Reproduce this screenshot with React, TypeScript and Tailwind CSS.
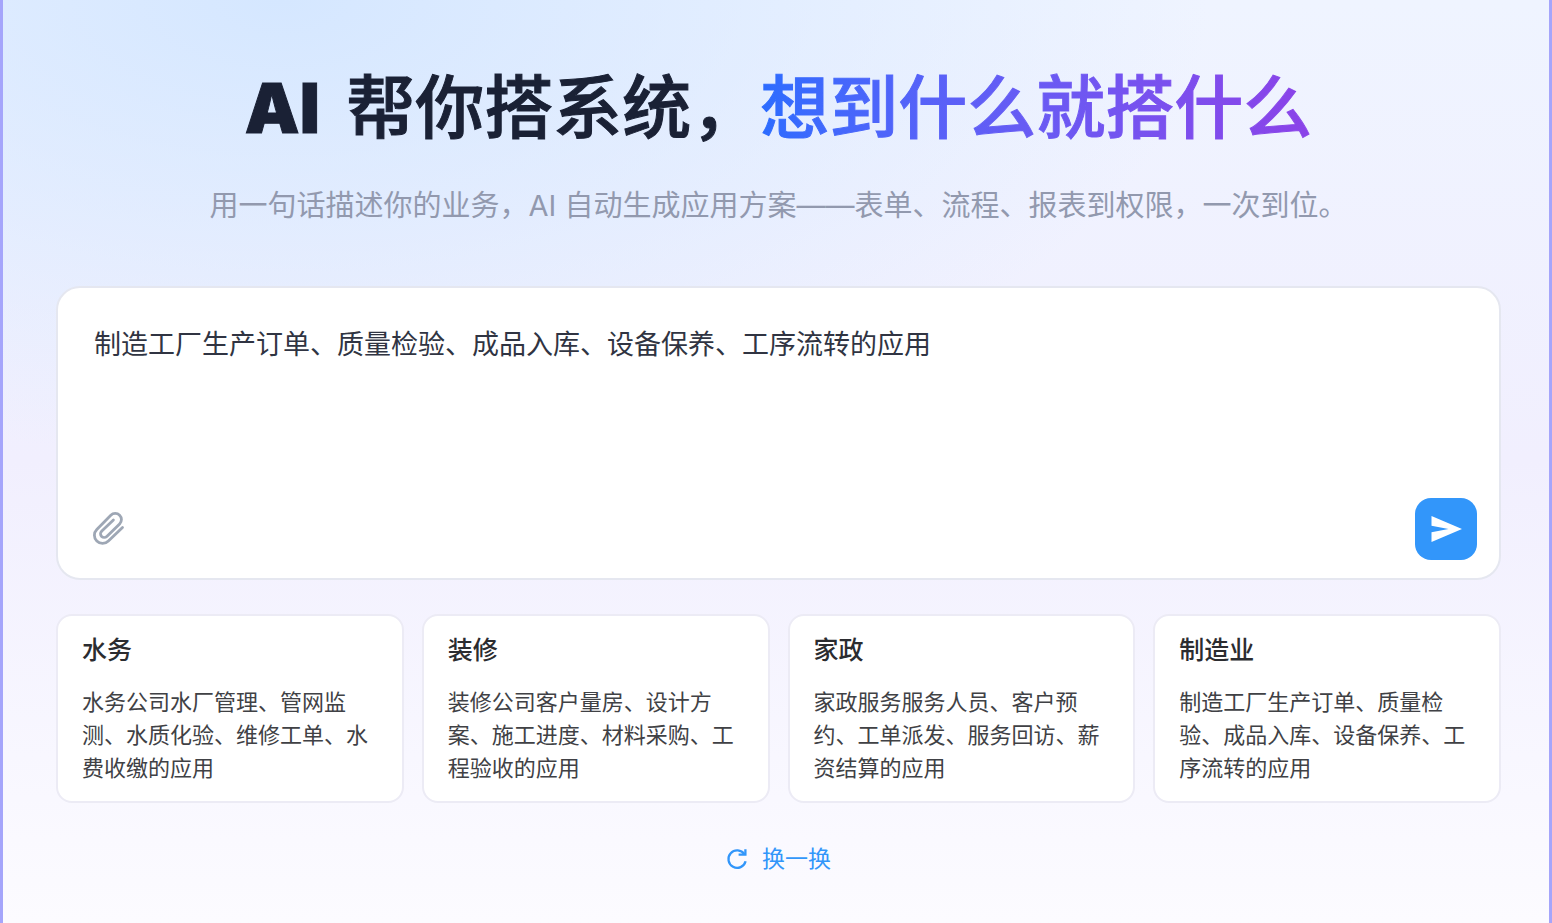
import React from "react";

type Scene = {
  title: string;
  desc: string;
};

const scenes: Scene[] = [
  { title: "水务", desc: "水务公司水厂管理、管网监测、水质化验、维修工单、水费收缴的应用" },
  { title: "装修", desc: "装修公司客户量房、设计方案、施工进度、材料采购、工程验收的应用" },
  { title: "家政", desc: "家政服务服务人员、客户预约、工单派发、服务回访、薪资结算的应用" },
  { title: "制造业", desc: "制造工厂生产订单、质量检验、成品入库、设备保养、工序流转的应用" },
];

const ClipIcon = () => (
  <svg className="h-9 w-9" viewBox="-1 1 36 36" fill="none" stroke="currentColor" strokeWidth="2.8" strokeLinecap="round" strokeLinejoin="round">
    <path d="M31.5 17.5 17.4 31a8.2 8.2 0 0 1-11.6 0 8.2 8.2 0 0 1 0-11.6L19.8 5.2a6.2 6.2 0 0 1 8.8 0 6.2 6.2 0 0 1 0 8.8L15.8 26.4a3.7 3.7 0 0 1-5.2 0 3.7 3.7 0 0 1 0-5.2L22.4 10" />
  </svg>
);

const SendIcon = () => (
  <svg className="h-8 w-8" viewBox="0 0 32 32" fill="currentColor">
    <path d="M1.5 3 32 16 1.5 29V19.2L18.5 16 1.5 12.8Z" />
  </svg>
);

const RefreshIcon = () => (
  <svg className="h-6 w-6" viewBox="0 0 24 24" fill="none" stroke="currentColor" strokeWidth="2.3">
    <path d="M19.6 14.3a8.7 8.7 0 1 1-1.2-7" />
    <path d="M19.4 2.3v5.4h-6.8" />
  </svg>
);

const App = () => {
  return (
    <div className="min-h-screen border-x-3 border-[#a5a5fb] bg-[radial-gradient(ellipse_60%_50%_at_18%_0%,#d5e7ff_0%,#d5e7ff00_100%),linear-gradient(180deg,#eff4ff_0%,#f1effe_50%,#f8f7ff_82%,#fcfbff_100%)] pt-[60px] pr-12 pb-9 pl-[53px] font-['Inter','Noto_Sans_CJK_SC',sans-serif]">
      <header className="text-center">
        <h1 className="text-[69px] leading-24 font-medium text-[#1a2135] [-webkit-text-stroke:1px]">
          <span className="mr-2 font-black">AI</span> 帮你搭系统，
          <span className="bg-linear-to-r from-[#2b6cff] to-[#8b42e8] bg-clip-text text-transparent">
            想到什么就搭什么
          </span>
        </h1>
        <p className="mt-7 text-[29px] leading-11 text-[#9299ae]">
          用一句话描述你的业务，AI 自动生成应用方案——表单、流程、报表到权限，一次到位。
        </p>
      </header>

      <form className="mt-[58px] rounded-3xl border-2 border-[#e5e7f0] bg-white pt-[33px] pr-[22px] pb-[18px] pl-9" onSubmit={(e) => e.preventDefault()}>
        <textarea
          aria-label="业务描述"
          className="block h-40 w-full resize-none text-[27px] leading-12 text-[#303442] outline-none"
          defaultValue="制造工厂生产订单、质量检验、成品入库、设备保养、工序流转的应用"
        />
        <div className="mt-[17px] flex items-center justify-between">
          <button type="button" aria-label="添加附件" className="-ml-1 text-[#9ea7b5]">
            <ClipIcon />
          </button>
          <button type="submit" aria-label="发送" className="flex h-[62px] w-[62px] items-center justify-center rounded-2xl bg-[#3296fa] text-white">
            <SendIcon />
          </button>
        </div>
      </form>

      <div className="mt-[34px] grid grid-cols-4 gap-[18px]">
        {scenes.map((scene) => (
          <button key={scene.title} type="button" className="rounded-2xl border-2 border-[#ecebf5] bg-white px-6 pt-4 pb-4 text-left">
            <h2 className="text-[25px] leading-9 font-medium text-[#2b2c30]">{scene.title}</h2>
            <p className="mt-[18px] text-[22px] leading-[33px] text-[#404145]">{scene.desc}</p>
          </button>
        ))}
      </div>

      <div className="mt-9 flex justify-center">
        <button type="button" className="flex items-center gap-3 text-[23px] leading-10 text-[#3296fa]">
          <RefreshIcon />
          换一换
        </button>
      </div>
    </div>
  );
};

export default App;
